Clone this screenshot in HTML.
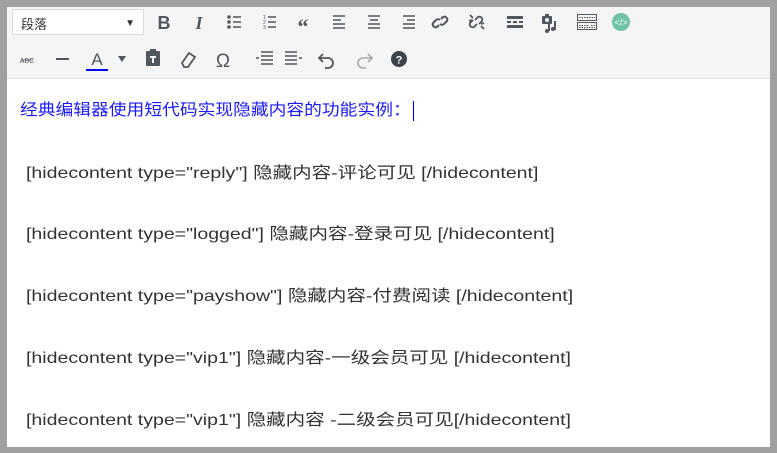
<!DOCTYPE html>
<html><head><meta charset="utf-8"><style>
*{margin:0;padding:0;box-sizing:border-box}
body{width:777px;height:453px;background:#a0a0a0;position:relative;overflow:hidden;font-family:"Liberation Sans","Noto Sans CJK SC",sans-serif}
#ed{position:absolute;left:7px;top:7px;width:763px;height:440px;background:#fff}
#tb{position:absolute;left:0;top:0;width:763px;height:72px;background:#f5f5f5;border-bottom:1px solid #e2e4e7}
#sel{position:absolute;left:5px;top:2px;width:132px;height:26px;background:#fff;border:1px solid #ddd;font-size:13px;color:#333;padding:4px 0 0 8px}
#sel span{position:absolute;right:8px;top:8px;font-size:10px;color:#333}
.t{position:absolute;left:19px;font-size:16px;color:#333;white-space:nowrap;transform:scaleX(1.22);transform-origin:0 0}
</style></head><body>
<div id="ed">
<div id="tb">
<div id="sel">段落<span>▼</span></div>
<svg width="763" height="72" style="position:absolute;left:0;top:0" fill="none" stroke="#50575e" stroke-width="2">
<text x="157" y="22" font-size="18" font-weight="bold" fill="#50575e" stroke="none" text-anchor="middle" font-family="Liberation Sans">B</text>
<text x="192" y="22" font-size="18" font-style="italic" font-family="Liberation Serif" fill="#50575e" stroke="none" text-anchor="middle" font-weight="bold">I</text>
<g stroke-width="1.6"><circle cx="222" cy="10" r="1" /><circle cx="222" cy="15" r="1"/><circle cx="222" cy="20" r="1"/><path d="M226 10h8M226 15h8M226 20h8"/></g>
<g stroke-width="1.4"><path d="M261 10h8M261 15h8M261 20h8"/><text x="256" y="12" font-size="5" fill="#50575e" stroke="none">1</text><text x="256" y="17" font-size="5" fill="#50575e" stroke="none">2</text><text x="256" y="22" font-size="5" fill="#50575e" stroke="none">3</text></g>
<text x="296" y="27" font-size="22" font-weight="bold" fill="#50575e" stroke="none" text-anchor="middle" font-family="Liberation Serif">“</text>
<g stroke-width="1.6"><path d="M326 9h12M326 13h8M326 17h12M326 21h12"/><path d="M361 9h12M363 13h8M361 17h12M361 21h12"/><path d="M396 9h12M400 13h8M396 17h12M396 21h12"/></g>
<path d="M432 18l-2 2a3 3 0 0 1-4-4l3-3a3 3 0 0 1 4 0M434 12l2-2a3 3 0 0 1 4 4l-3 3a3 3 0 0 1-4 0" stroke-width="2"/>
<path d="M468 13l3-3a3 3 0 0 1 4 4l-3 3M470 17l-3 3a3 3 0 0 1-4-4l3-3M463 8l3 3M477 22l-3-3M465 13l-3 1M474 17l3-1" stroke-width="1.8"/>
<g stroke="none" fill="#50575e"><rect x="500" y="9" width="16" height="3"/><rect x="500" y="14" width="4" height="2"/><rect x="506" y="14" width="4" height="2"/><rect x="512" y="14" width="4" height="2"/><rect x="500" y="18" width="16" height="3"/>
<rect x="535" y="9" width="10" height="8" rx="1"/><rect x="538" y="7" width="4" height="3"/><circle cx="540" cy="13" r="2" fill="#f5f5f5"/><rect x="547" y="14" width="2" height="9"/><circle cx="546" cy="22" r="2"/><circle cx="540" cy="24" r="2"/><rect x="541" y="17" width="2" height="7"/></g>
<g stroke-width="1" stroke="#50575e"><rect x="570.5" y="7.5" width="19" height="6"/><rect x="570.5" y="15.5" width="19" height="7"/><path d="M572 10.5h16M572 18.5h10M584 18.5h4M572 20.5h16" stroke-dasharray="1.5 1"/></g>
<circle cx="614" cy="15" r="9" fill="#6fc3a6" stroke="none"/>
<text x="614" y="18.5" font-size="9" fill="#fff" stroke="none" text-anchor="middle">&lt;/&gt;</text>
<text x="20" y="56" font-size="7" fill="#50575e" stroke="none" text-anchor="middle">ABC</text><path d="M14 53h12" stroke-width="0.8"/>
<path d="M49 52h13" stroke-width="2"/>
<text x="90" y="58" font-size="17" fill="#50575e" stroke="none" text-anchor="middle">A</text><path d="M79 63h22" stroke="#00f" stroke-width="2"/>
<path d="M111 49h8l-4 6z" fill="#50575e" stroke="none"/>
<g stroke="none" fill="#50575e"><rect x="139" y="44" width="14" height="15" rx="1"/><rect x="143" y="42" width="6" height="4"/></g><path d="M143 50h6M146 50v6" stroke="#f5f5f5" stroke-width="2"/>
<path d="M175 56l7-10 6 4-7 10h-4z" stroke-width="1.8"/>
<text x="216" y="60" font-size="19" fill="#50575e" stroke="none" text-anchor="middle" font-family="Liberation Sans">Ω</text>
<g stroke-width="1.6"><path d="M254 45h12M254 49h12M254 53h12M254 57h12M249 51h3"/><path d="M278 45h12M278 49h12M278 53h12M278 57h12M292 51h3"/></g>
<path d="M316 47l-4 4 4 4M312 51h9a5 5 0 0 1 0 10h-3" stroke-width="1.8"/>
<path d="M361 47l4 4-4 4M365 51h-9a5 5 0 0 0 0 10h3" stroke="#a7aaad" stroke-width="1.6"/>
<circle cx="392" cy="52" r="8" fill="#3c434a" stroke="none"/><text x="392" y="56.5" font-size="11" font-weight="bold" fill="#fff" stroke="none" text-anchor="middle">?</text>
</svg>
</div>
<div class="t" style="top:89px;left:13px;color:#1a1aff;transform:scaleX(1.11)">经典编辑器使用短代码实现隐藏内容的功能实例：<span style="display:inline-block;width:1px;height:20px;background:#00f;vertical-align:middle;margin-left:2px"></span></div>
<div class="t" style="top:152px">[hidecontent type="reply"] 隐藏内容-评论可见 [/hidecontent]</div>
<div class="t" style="top:213px">[hidecontent type="logged"] 隐藏内容-登录可见 [/hidecontent]</div>
<div class="t" style="top:275px">[hidecontent type="payshow"] 隐藏内容-付费阅读 [/hidecontent]</div>
<div class="t" style="top:337px">[hidecontent type="vip1"] 隐藏内容-一级会员可见 [/hidecontent]</div>
<div class="t" style="top:399px">[hidecontent type="vip1"] 隐藏内容 -二级会员可见[/hidecontent]</div>
</div>
</body></html>
